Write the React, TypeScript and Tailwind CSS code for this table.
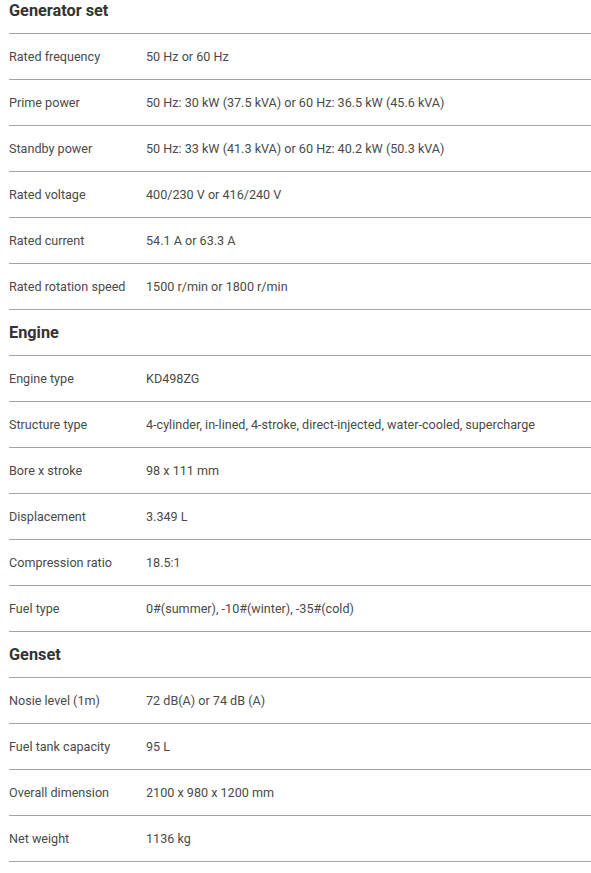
const SECTIONS: { title: string; rows: [string, string][] }[] = [
  {
    title: "Generator set",
    rows: [
      ["Rated frequency", "50 Hz or 60 Hz"],
      ["Prime power", "50 Hz: 30 kW (37.5 kVA) or 60 Hz: 36.5 kW (45.6 kVA)"],
      ["Standby power", "50 Hz: 33 kW (41.3 kVA) or 60 Hz: 40.2 kW (50.3 kVA)"],
      ["Rated voltage", "400/230 V or 416/240 V"],
      ["Rated current", "54.1 A or 63.3 A"],
      ["Rated rotation speed", "1500 r/min or 1800 r/min"],
    ],
  },
  {
    title: "Engine",
    rows: [
      ["Engine type", "KD498ZG"],
      ["Structure type", "4-cylinder, in-lined, 4-stroke, direct-injected, water-cooled, supercharge"],
      ["Bore x stroke", "98 x 111 mm"],
      ["Displacement", "3.349 L"],
      ["Compression ratio", "18.5:1"],
      ["Fuel type", "0#(summer), -10#(winter), -35#(cold)"],
    ],
  },
  {
    title: "Genset",
    rows: [
      ["Nosie level (1m)", "72 dB(A) or 74 dB (A)"],
      ["Fuel tank capacity", "95 L"],
      ["Overall dimension", "2100 x 980 x 1200 mm"],
      ["Net weight", "1136 kg"],
    ],
  },
];

export default function App() {
  return (
    <div className="w-[591px] h-[873px] overflow-hidden bg-white font-['Roboto',sans-serif]">
      <div className="-mt-[12px] pl-[9px]">
        {SECTIONS.map(s => (
          <div key={s.title}>
            <div className="h-[46px] pt-[2px] flex items-center border-b border-[#a3a3a3]">
              <h3 className="text-[16.3px] font-bold text-[#333333] leading-none">{s.title}</h3>
            </div>
            {s.rows.map(([k, v]) => (
              <div key={k} className="h-[46px] pt-[2px] flex items-center border-b border-[#a3a3a3] text-[12.6px] text-[#4a4a4a]">
                <span className="w-[137px] shrink-0">{k}</span>
                <span className="whitespace-nowrap">{v}</span>
              </div>
            ))}
          </div>
        ))}
      </div>
    </div>
  );
}
